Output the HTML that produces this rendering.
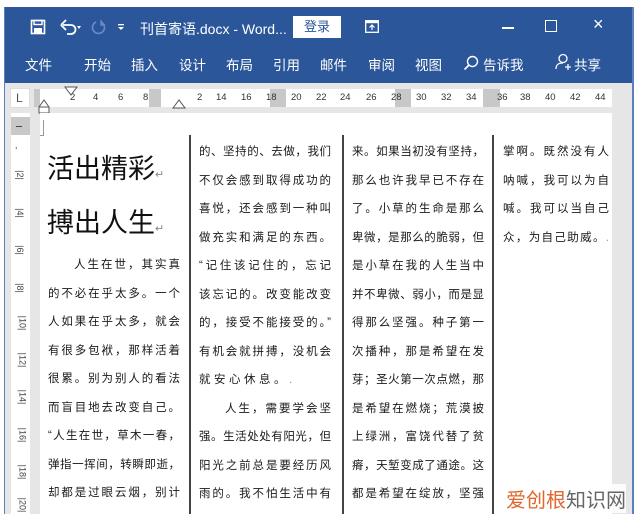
<!DOCTYPE html>
<html style="width:640px;height:514px;overflow:hidden"><head><meta charset="utf-8"><style>
*{margin:0;padding:0;box-sizing:border-box}
body{width:640px;height:514px;overflow:hidden;background:#fff;position:relative;font-family:"Liberation Sans","Noto Sans CJK SC",sans-serif}
.abs{position:absolute}
#frame{left:4px;top:7px;width:630px;height:507px;background:#e6e6e6;border-left:1px solid #5b7fc0;border-right:2px solid #5b7fc0}
#bar{left:5px;top:7px;width:627px;height:76px;background:#2b579a;color:#fff}
.t{position:absolute;color:#fff;white-space:nowrap}
.tab{top:47px;font-size:13.5px}
#page{left:40px;top:113px;width:572px;height:401px;background:#fff}
.col{position:absolute;font-size:11.5px;color:#1a1a1a}
.ln{position:absolute;height:20px;white-space:nowrap;text-align:justify;text-align-last:justify}
.div{position:absolute;top:135px;width:1.5px;height:379px;background:#444}
.rn{position:absolute;top:92px;font-size:9.5px;color:#333}
.vr{position:absolute;left:15px;font-size:9px;color:#444;transform:rotate(90deg)}
</style></head><body>
<div class="abs" id="frame"></div>
<div class="abs" id="bar">
 <svg class="abs" style="left:25px;top:12px" width="16" height="16" viewBox="0 0 16 16"><rect x="1.5" y="1.5" width="13" height="13" fill="none" stroke="#fff" stroke-width="1.6"/><rect x="4" y="1.5" width="8" height="4" fill="none" stroke="#fff" stroke-width="1.4"/><rect x="4" y="9" width="8" height="5.5" fill="#fff"/></svg>
 <svg class="abs" style="left:55px;top:12px" width="22" height="16" viewBox="0 0 22 16"><path d="M3 6 H11 A4.5 4.5 0 0 1 11 15 H7" fill="none" stroke="#fff" stroke-width="1.8"/><path d="M1 6 L6 1 M1 6 L6 11" stroke="#fff" stroke-width="1.8" fill="none"/><path d="M17 7 L21 7 L19 10Z" fill="#fff"/></svg>
 <svg class="abs" style="left:86px;top:12px" width="16" height="16" viewBox="0 0 16 16"><path d="M10 3 A6 6 0 1 1 5 3" fill="none" stroke="#6e8cc4" stroke-width="1.6"/><path d="M10 1 V6 H14" fill="none" stroke="#6e8cc4" stroke-width="1.4"/></svg>
 <svg class="abs" style="left:111px;top:15px" width="10" height="10" viewBox="0 0 10 10"><rect x="2" y="2" width="6" height="1.3" fill="#fff"/><path d="M2 5 H8 L5 8Z" fill="#fff"/></svg>
 <div class="t" style="left:135px;top:12px;font-size:14px">刊首寄语.docx - Word...</div>
 <div class="abs" style="left:288px;top:9px;width:48px;height:22px;background:#fff;color:#2b579a;font-size:13px;text-align:center;line-height:22px">登录</div>
 <svg class="abs" style="left:360px;top:13px" width="14" height="13" viewBox="0 0 14 13"><rect x="0.7" y="0.7" width="12.6" height="11.6" fill="none" stroke="#fff" stroke-width="1.3"/><rect x="0.7" y="0.7" width="12.6" height="2.5" fill="#fff"/><path d="M7 5 V10 M4.5 7.5 L7 5 L9.5 7.5" stroke="#fff" stroke-width="1.2" fill="none"/></svg>
 <div class="abs" style="left:497px;top:20px;width:12px;height:1.5px;background:#fff"></div>
 <div class="abs" style="left:540px;top:13px;width:12px;height:12px;border:1.3px solid #fff"></div>
 <div class="t" style="left:588px;top:7px;font-size:18px;font-weight:300">×</div>
 <div class="t tab" style="left:20px">文件</div>
 <div class="t tab" style="left:79px">开始</div>
 <div class="t tab" style="left:126px">插入</div>
 <div class="t tab" style="left:174px">设计</div>
 <div class="t tab" style="left:221px">布局</div>
 <div class="t tab" style="left:268px">引用</div>
 <div class="t tab" style="left:315px">邮件</div>
 <div class="t tab" style="left:363px">审阅</div>
 <div class="t tab" style="left:410px">视图</div>
 <svg class="abs" style="left:458px;top:48px" width="16" height="16" viewBox="0 0 16 16"><circle cx="9.5" cy="6.5" r="5" fill="none" stroke="#fff" stroke-width="1.4"/><path d="M6 10 L1.5 14.5" stroke="#fff" stroke-width="1.6"/></svg>
 <div class="t tab" style="left:478px">告诉我</div>
 <svg class="abs" style="left:550px;top:46px" width="18" height="18" viewBox="0 0 18 18"><circle cx="8" cy="5.5" r="4" fill="none" stroke="#fff" stroke-width="1.3"/><path d="M1 16 C1 11 4 10 8 10" fill="none" stroke="#fff" stroke-width="1.3"/><path d="M13 11 V17 M10 14 H16" stroke="#fff" stroke-width="1.3"/></svg>
 <div class="t tab" style="left:569px">共享</div>
</div>
<!-- ruler -->
<div class="abs" style="left:10px;top:88px;width:20px;height:20px;background:#fff;border:1px solid #ddd"></div>
<div class="abs" style="left:16px;top:91px;font-size:12px;color:#555">L</div>
<div class="abs" style="left:38px;top:89px;width:461px;height:18px;background:#fff"></div>
<div class="abs" style="left:34px;top:89px;width:6px;height:18px;background:#c8c8c8"></div>
<div class="abs" style="left:149px;top:89px;width:12px;height:18px;background:#c8c8c8"></div>
<div class="abs" style="left:270px;top:89px;width:16px;height:18px;background:#c8c8c8"></div>
<div class="abs" style="left:395px;top:89px;width:16px;height:18px;background:#c8c8c8"></div>
<div class="abs" style="left:498px;top:89px;width:114px;height:18px;background:#fff"></div>
<div class="abs" style="left:483px;top:89px;width:17px;height:18px;background:#c8c8c8"></div>
<div class="rn" style="left:70px">2</div><div class="rn" style="left:93px">4</div><div class="rn" style="left:118px">6</div><div class="rn" style="left:143px">8</div>
<div class="rn" style="left:197px">2</div><div class="rn" style="left:216px">14</div><div class="rn" style="left:241px">16</div><div class="rn" style="left:266px">18</div><div class="rn" style="left:291px">20</div><div class="rn" style="left:316px">22</div><div class="rn" style="left:340px">24</div><div class="rn" style="left:366px">26</div><div class="rn" style="left:391px">28</div><div class="rn" style="left:416px">30</div><div class="rn" style="left:441px">32</div><div class="rn" style="left:466px">34</div><div class="rn" style="left:497px">36</div><div class="rn" style="left:520px">38</div><div class="rn" style="left:545px">40</div><div class="rn" style="left:570px">42</div><div class="rn" style="left:595px">44</div>
<svg class="abs" style="left:64px;top:86px" width="14" height="12" viewBox="0 0 14 12"><path d="M1 1 H13 L7 9Z" fill="#fff" stroke="#555"/></svg>
<svg class="abs" style="left:38px;top:98px" width="12" height="22" viewBox="0 0 12 22"><path d="M1 9 L6 2 L11 9 V15 H1Z M1 9 H11" fill="#fff" stroke="#555"/></svg>
<svg class="abs" style="left:172px;top:98px" width="14" height="12" viewBox="0 0 14 12"><path d="M1 10 L7 2 L13 10Z" fill="#fff" stroke="#555"/></svg>
<!-- vertical ruler -->
<div class="abs" style="left:11px;top:113px;width:19px;height:401px;background:#fff"></div>
<div class="abs" style="left:11px;top:117px;width:19px;height:18px;background:#c8c8c8"></div>
<div class="abs" style="left:16px;top:126px;width:6px;height:1px;background:#444"></div>
<div class="vr" style="top:143px">-</div><div class="vr" style="top:170px">|2|</div><div class="vr" style="top:208px">|4|</div><div class="vr" style="top:245px">|6|</div><div class="vr" style="top:283px">|8|</div><div class="vr" style="top:318px">|10|</div><div class="vr" style="top:355px">|12|</div><div class="vr" style="top:392px">|14|</div><div class="vr" style="top:430px">|16|</div><div class="vr" style="top:467px">|18|</div><div class="vr" style="top:500px">|20|</div>
<!-- page -->
<div class="abs" id="page"></div>
<div class="abs" style="left:40px;top:120px;width:4px;height:16px;border-right:1px solid #999;border-bottom:1px solid #999"></div>
<div class="div" style="left:189px"></div>
<div class="div" style="left:342px"></div>
<div class="div" style="left:492px"></div>
<div class="abs" style="left:47px;top:147px;font-size:27px;color:#111">活出精彩<span style="font-size:11px;color:#888">↵</span></div>
<div class="abs" style="left:47px;top:201px;font-size:27px;color:#111">搏出人生<span style="font-size:11px;color:#888">↵</span></div>
<div class="col" style="left:48px;top:256px;width:132px">
<div class="ln" style="top:0;left:26px;width:106px">人生在世，其实真</div>
<div class="ln" style="top:28.5px;width:132px">的不必在乎太多。一个</div>
<div class="ln" style="top:57px;width:132px">人如果在乎太多，就会</div>
<div class="ln" style="top:85.5px;width:132px">有很多包袱，那样活着</div>
<div class="ln" style="top:114px;width:132px">很累。别为别人的看法</div>
<div class="ln" style="top:142.5px;width:132px">而盲目地去改变自己。</div>
<div class="ln" style="top:171px;width:132px">“人生在世，草木一春，</div>
<div class="ln" style="top:199.5px;width:132px">弹指一挥间，转瞬即逝，</div>
<div class="ln" style="top:228px;width:132px">却都是过眼云烟，别计</div>
<div class="ln" style="top:256.5px;width:132px">较太多，何必在意。”莫</div>
</div>
<div class="col" style="left:199px;top:143px;width:132px">
<div class="ln" style="top:0;width:132px">的、坚持的、去做，我们</div>
<div class="ln" style="top:28.5px;width:132px">不仅会感到取得成功的</div>
<div class="ln" style="top:57px;width:132px">喜悦，还会感到一种叫</div>
<div class="ln" style="top:85.5px;width:132px">做充实和满足的东西。</div>
<div class="ln" style="top:114px;width:132px">“记住该记住的，忘记</div>
<div class="ln" style="top:142.5px;width:132px">该忘记的。改变能改变</div>
<div class="ln" style="top:171px;width:132px">的，接受不能接受的。”</div>
<div class="ln" style="top:199.5px;width:132px">有机会就拼搏，没机会</div>
<div class="ln" style="top:228px;width:132px;text-align-last:left;letter-spacing:3.5px">就安心休息。<span style="color:#999">.</span></div>
<div class="ln" style="top:256.5px;left:26px;width:106px">人生，需要学会坚</div>
<div class="ln" style="top:285px;width:132px">强。生活处处有阳光，但</div>
<div class="ln" style="top:313.5px;width:132px">阳光之前总是要经历风</div>
<div class="ln" style="top:342px;width:132px">雨的。我不怕生活中有</div>
<div class="ln" style="top:370.5px;width:132px">许多的风雨，所以我很</div>
</div>
<div class="col" style="left:352px;top:143px;width:132px">
<div class="ln" style="top:0;width:132px">来。如果当初没有坚持，</div>
<div class="ln" style="top:28.5px;width:132px">那么也许我早已不存在</div>
<div class="ln" style="top:57px;width:132px">了。小草的生命是那么</div>
<div class="ln" style="top:85.5px;width:132px">卑微，是那么的脆弱，但</div>
<div class="ln" style="top:114px;width:132px">是小草在我的人生当中</div>
<div class="ln" style="top:142.5px;width:132px">并不卑微、弱小，而是显</div>
<div class="ln" style="top:171px;width:132px">得那么坚强。种子第一</div>
<div class="ln" style="top:199.5px;width:132px">次播种，那是希望在发</div>
<div class="ln" style="top:228px;width:132px">芽；圣火第一次点燃，那</div>
<div class="ln" style="top:256.5px;width:132px">是希望在燃烧；荒漠披</div>
<div class="ln" style="top:285px;width:132px">上绿洲，富饶代替了贫</div>
<div class="ln" style="top:313.5px;width:132px">瘠，天堑变成了通途。这</div>
<div class="ln" style="top:342px;width:132px">都是希望在绽放，坚强</div>
<div class="ln" style="top:370.5px;width:132px">在开花。对于我的人生</div>
</div>
<div class="col" style="left:503px;top:143px;width:107px">
<div class="ln" style="top:0;width:106px">掌啊。既然没有人</div>
<div class="ln" style="top:28.5px;width:106px">呐喊，我可以为自</div>
<div class="ln" style="top:57px;width:106px">喊。我可以当自己</div>
<div class="ln" style="top:85.5px;width:106px">众，为自己助威。<span style="color:#999">.</span></div>
</div>
<div class="abs" style="left:506px;top:484px;font-size:20px;white-space:nowrap;background:rgba(255,255,255,.85)"><span style="color:#e0662a">爱创根</span><span style="color:#666">知识网</span></div>
</body></html>
